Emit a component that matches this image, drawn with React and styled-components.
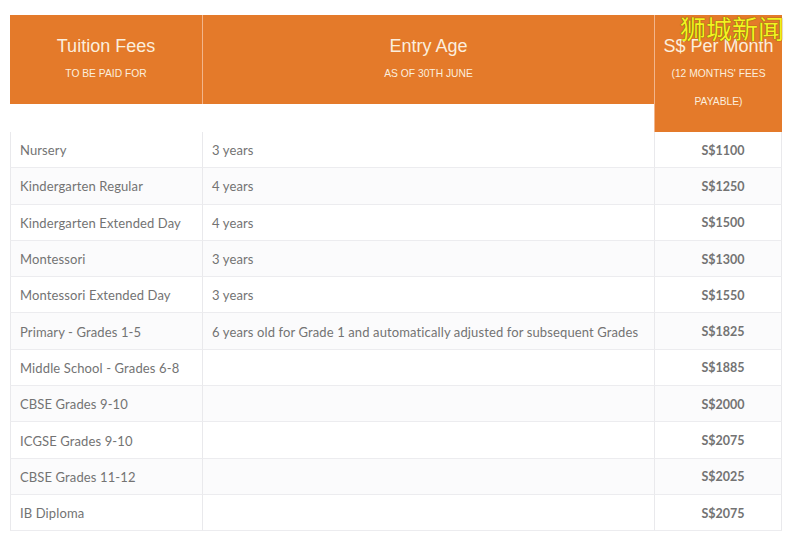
import React from 'react';
import styled, { createGlobalStyle } from 'styled-components';

const GlobalStyle = createGlobalStyle`
    body {
        margin: 0;
        background: #ffffff;
    }
`;

const Page = styled.div`
    position: relative;
    width: 800px;
    height: 542px;
    padding: 15px 18px 0 10px;
    box-sizing: border-box;
    background: #ffffff;
    overflow: hidden;
`;

const Table = styled.div`
    display: grid;
    grid-template-columns: 192px 452px 128px;
    align-items: start;
`;

const HeadCell = styled.div`
    background: #e47a2a;
    color: #fbeedd;
    font-family: "Liberation Sans", Arial, sans-serif;
    text-align: center;
    padding: 20px 6px 16px;
    border-left: ${(p) => (p.$first ? 'none' : '1px solid #f2b58a')};
    margin-bottom: ${(p) => (p.$tall ? '0' : '28px')};
`;

const HeadTitle = styled.div`
    font-size: 18px;
    line-height: 22px;
`;

const HeadSub = styled.div`
    margin-top: 3px;
    font-size: 10.3px;
    line-height: 28px;
    text-transform: uppercase;
`;

const Cell = styled.div`
    height: 36.3px;
    box-sizing: border-box;
    display: flex;
    align-items: center;
    justify-content: ${(p) => (p.$price ? 'center' : 'flex-start')};
    padding: ${(p) => (p.$price ? '1px 0 0 10px' : '1px 9px 0')};
    background: ${(p) => (p.$odd ? '#fbfbfc' : '#ffffff')};
    border-bottom: 1px solid #ececef;
    border-left: 1px solid #e9e9ec;
    border-right: ${(p) => (p.$price ? '1px solid #e9e9ec' : 'none')};
    color: #737373;
    font-family: "Lato", "Open Sans", sans-serif;
    font-size: ${(p) => (p.$price ? '12.5px' : '13px')};
    font-weight: ${(p) => (p.$price ? 700 : 400)};
    letter-spacing: ${(p) => (p.$price ? '0' : '0.12px')};
    white-space: nowrap;
`;

const Watermark = styled.div`
    position: absolute;
    top: 13px;
    left: 680px;
    font-family: "Noto Sans CJK SC", sans-serif;
    font-size: 26px;
    line-height: 30px;
    color: #f4f222;
    text-shadow: 0 0 1px #6e6000, 0 0 1px #6e6000;
    letter-spacing: 0;
`;

const rows = [
    ['Nursery', '3 years', 'S$1100'],
    ['Kindergarten Regular', '4 years', 'S$1250'],
    ['Kindergarten Extended Day', '4 years', 'S$1500'],
    ['Montessori', '3 years', 'S$1300'],
    ['Montessori Extended Day', '3 years', 'S$1550'],
    ['Primary - Grades 1-5', '6 years old for Grade 1 and automatically adjusted for subsequent Grades', 'S$1825'],
    ['Middle School - Grades 6-8', '', 'S$1885'],
    ['CBSE Grades 9-10', '', 'S$2000'],
    ['ICGSE Grades 9-10', '', 'S$2075'],
    ['CBSE Grades 11-12', '', 'S$2025'],
    ['IB Diploma', '', 'S$2075'],
];

const App = () => {
    return (
        <Page>
            <GlobalStyle />
            <Table>
                <HeadCell $first>
                    <HeadTitle>Tuition Fees</HeadTitle>
                    <HeadSub>To be paid for</HeadSub>
                </HeadCell>
                <HeadCell>
                    <HeadTitle>Entry Age</HeadTitle>
                    <HeadSub>As of 30th June</HeadSub>
                </HeadCell>
                <HeadCell $tall>
                    <HeadTitle>S$ Per Month</HeadTitle>
                    <HeadSub>(12 Months' Fees<br />Payable)</HeadSub>
                </HeadCell>
                {rows.map((r, i) => (
                    <React.Fragment key={r[0]}>
                        <Cell $odd={i % 2 === 1}>{r[0]}</Cell>
                        <Cell $odd={i % 2 === 1}>{r[1]}</Cell>
                        <Cell $odd={i % 2 === 1} $price>{r[2]}</Cell>
                    </React.Fragment>
                ))}
            </Table>
            <Watermark>狮城新闻</Watermark>
        </Page>
    );
};

export default App;
